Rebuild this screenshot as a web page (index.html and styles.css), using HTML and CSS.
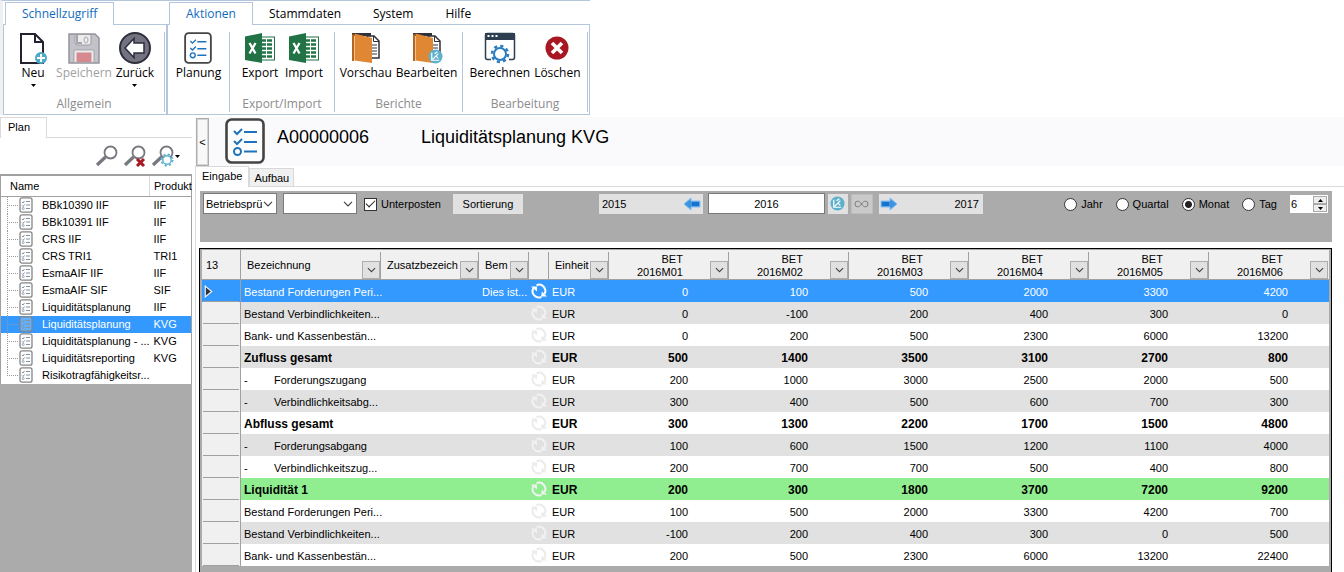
FILE: index.html
```html
<!DOCTYPE html>
<html lang="de">
<head>
<meta charset="utf-8">
<title>Liquiditätsplanung KVG</title>
<link rel="stylesheet" href="styles.css">
</head>
<body>
<svg class="defs" aria-hidden="true">
  <symbol id="list" viewBox="0 0 40 46">
    <rect x="1.500" y="1.500" width="37" height="43" rx="5" fill="#fdfdfe" stroke="#444" stroke-width="2.600"/>
    <g fill="none" stroke="#1e73be" stroke-width="2"><path d="M9 13l3 3 5-5M9 23l3 3 5-5M19 14h13M19 24h13M19 33.500h13"/><circle cx="12.500" cy="33.500" r="3.500"/></g>
  </symbol>
  <symbol id="node" viewBox="0 0 14 16">
    <rect x="1" y=".8" width="12" height="14.400" rx="2" fill="#f6f6f6" fill-opacity=".25" stroke="#858585" stroke-width="1.300"/>
    <path d="M3 5l1 1 1.500-2M3 8.500l1 1 1.500-2M7 4.500h4M7 8h4M7 11.500h4" fill="none" stroke="#8193a3"/><circle cx="4.200" cy="11.500" r="1" fill="none" stroke="#8193a3" stroke-width=".8"/>
  </symbol>
  <symbol id="branch" viewBox="0 0 18 17"><path d="M6.500 0v17M8 8.500h10" stroke="#999" stroke-dasharray="1 1" fill="none"/></symbol>
  <symbol id="branch-end" viewBox="0 0 18 17"><path d="M6.500 0v9M8 8.500h10" stroke="#999" stroke-dasharray="1 1" fill="none"/></symbol>
  <symbol id="chev" viewBox="0 0 10 6"><path d="M1 .8l4 4 4-4" fill="none" stroke="#444" stroke-width="1.200"/></symbol>
  <symbol id="tri" viewBox="0 0 5 3"><path d="M0 0h5L2.500 3z"/></symbol>
  <symbol id="cycle" viewBox="0 0 16 16">
    <path d="M10.500 13.800A6.200 6.200 0 0 1 2.500 5M5.500 2.300A6.200 6.200 0 0 1 13.500 11" fill="none" stroke="currentColor" stroke-width="2"/>
    <path d="M0 3.500h6v5zM16 13.500h-6l1-5z" fill="currentColor"/>
  </symbol>
  <symbol id="excel" viewBox="0 0 32 32">
    <rect x="15" y="5" width="15.500" height="23" fill="#fff" stroke="#217346" stroke-width="1"/>
    <path d="M18 8.500h10M18 12.500h10M18 16.500h10M18 20.500h10M18 24.500h10" stroke="#217346" stroke-width="2.400"/>
    <path d="M22.500 6v21" stroke="#fff"/>
    <path d="M1 4.500L18 1v30L1 28z" fill="#217346"/><path d="M5.500 11l6 10.500M11.500 11l-6 10.500" stroke="#fff" stroke-width="2.300"/>
  </symbol>
  <symbol id="book" viewBox="0 0 32 32">
    <path d="M17 4h7l5 5v17H19z" fill="#fff" stroke="#30303c" stroke-width="1.500"/><path d="M23.500 4v5.500H29M22 13h5M22 16h5M22 19h5M22 22h5" fill="none" stroke="#30303c"/>
    <path d="M2 1h19v3H2z" fill="#30303c"/><path d="M2 2l2 .5V29H2z" fill="#b5651d"/><path d="M4.500 1.500L22 6v25L4.500 28.500z" fill="#df8733"/>
  </symbol>
  <symbol id="edit" viewBox="0 0 16 16"><circle cx="8" cy="8" r="7.500" fill="#5fb0cc"/><path d="M4 4v8h8M5 11l6-6M8 7l3 3M7 5l3-2" fill="none" stroke="#fff" stroke-width="1.300"/></symbol>
  <symbol id="lens" viewBox="0 0 24 24"><path d="M2 21l8.500-8" stroke="#77777f" stroke-width="3.200"/><circle cx="15.500" cy="8.500" r="6" fill="none" stroke="#77777f" stroke-width="1.800"/></symbol>
  <symbol id="gear" viewBox="0 0 20 20"><circle cx="10" cy="10" r="6" fill="#fff" stroke="currentColor" stroke-width="2"/><circle cx="10" cy="10" r="8" fill="none" stroke="currentColor" stroke-width="2.500" stroke-dasharray="3.140 3.143"/></symbol>
  <symbol id="arrow" viewBox="0 0 18 14"><path d="M1 4h9V1l7 6-7 6v-3H1z" fill="#3e93df" stroke="#84bdf0"/><path d="M2 5h7v4H2z" fill="#1772ce"/></symbol>
</svg>

<header class="ribbon">
  <section class="pane quick">
    <nav class="tabs"><button class="tab on">Schnellzugriff</button></nav>
    <div class="groups">
      <div class="group g-general">
        <div class="tools">
          <button class="tool"><svg viewBox="0 0 32 32"><path d="M4 2h14l8 8v21H4z" fill="#fff" stroke="#222230" stroke-width="2"/><path d="M18 2v8h8" fill="none" stroke="#222230" stroke-width="2"/><circle cx="24" cy="26" r="6" fill="#4ba9c9"/><path d="M20 26h8M24 22v8" stroke="#fff" stroke-width="2"/></svg>Neu<svg class="drop"><use href="#tri"/></svg></button>
          <button class="tool off"><svg viewBox="0 0 32 32"><path d="M1 2h26l4 4v25H1z" fill="#c2c2c8" stroke="#94949c" stroke-width="1.500"/><path d="M7 2.500h16V11q0 2-2 2H9q-2 0-2-2z" fill="#ececef" stroke="#9b9ba3"/><path d="M9 3v8h5" fill="none" stroke="#a5a5ad" stroke-width="2"/><ellipse cx="18" cy="8" rx="2" ry="3" fill="none" stroke="#aaa"/><path d="M6 30.500V18h20v12.500z" fill="#ececef" stroke="#a5a5ad"/><path d="M8.500 20.500h15v9.500h-15z" fill="#d58a90"/></svg>Speichern</button>
          <button class="tool"><svg viewBox="0 0 32 32"><circle cx="16" cy="16" r="15" fill="#73737f" stroke="#2d2d3c" stroke-width="2"/><path d="M6 16L15 6.500V11h10v10H15v4.500z" fill="#fff" stroke="#2d2d3c" stroke-width="1.500"/></svg>Zurück<svg class="drop"><use href="#tri"/></svg></button>
        </div>
        <span class="caption">Allgemein</span>
      </div>
    </div>
  </section>
  <section class="pane actions">
    <nav class="tabs"><button class="tab on">Aktionen</button><button class="tab wide">Stammdaten</button><button class="tab">System</button><button class="tab">Hilfe</button></nav>
    <div class="groups">
      <div class="group g-plan"><div class="tools"><button class="tool"><svg viewBox="-3 0 46 46"><use href="#list" width="40" height="46"/></svg>Planung</button></div></div>
      <div class="group g-export">
        <div class="tools"><button class="tool"><svg><use href="#excel"/></svg>Export</button><button class="tool"><svg><use href="#excel"/></svg>Import</button></div>
        <span class="caption">Export/Import</span>
      </div>
      <div class="group g-reports">
        <div class="tools"><button class="tool"><svg><use href="#book"/></svg>Vorschau</button><button class="tool"><svg viewBox="0 0 32 32"><use href="#book"/><use href="#edit" x="17" y="17" width="15" height="15"/></svg>Bearbeiten</button></div>
        <span class="caption">Berichte</span>
      </div>
      <div class="group g-work">
        <div class="tools"><button class="tool"><svg viewBox="0 0 32 32"><rect x="1.500" y="1.500" width="29" height="26" rx="2" fill="#fff" stroke="#2c3e50" stroke-width="1.500"/><path d="M1 1h30v7H1z" fill="#2c3e50"/><path d="M3.500 4h2M7.500 4h2M11.500 4h2" stroke="#fff" stroke-width="2"/><path d="M7 24h18v6H7z" fill="#fff"/><g color="#2a7cc0"><use href="#gear" x="6" y="12" width="20" height="20"/></g></svg>Berechnen</button><button class="tool"><svg viewBox="0 0 32 32"><circle cx="16" cy="16" r="11.500" fill="#a81722"/><path d="M11 11l10 10M21 11L11 21" stroke="#fff" stroke-width="3.600"/></svg>Löschen</button></div>
        <span class="caption">Bearbeitung</span>
      </div>
    </div>
  </section>
</header>

<div class="work">
  <aside class="side">
    <nav class="strip"><button class="sheet on">Plan</button></nav>
    <div class="find">
      <button aria-label="Suchen"><svg><use href="#lens"/></svg></button>
      <button aria-label="Suche löschen"><svg viewBox="0 0 24 24"><use href="#lens"/><path d="M14 15l7 7M21 15l-7 7" stroke="#a81722" stroke-width="3"/></svg></button>
      <button aria-label="Suchoptionen"><svg viewBox="0 0 24 24"><use href="#lens"/><g color="#5fb0cc"><use href="#gear" x="9" y="9" width="14" height="14"/></g></svg><svg class="drop"><use href="#tri"/></svg></button>
    </div>
    <table class="tree">
      <thead><tr><th class="c-name">Name</th><th>Produkt</th></tr></thead>
      <tbody>
        <tr><td><div class="leaf"><svg class="br"><use href="#branch"/></svg><svg class="nd"><use href="#node"/></svg>BBk10390 IIF</div></td><td>IIF</td></tr>
        <tr><td><div class="leaf"><svg class="br"><use href="#branch"/></svg><svg class="nd"><use href="#node"/></svg>BBk10391 IIF</div></td><td>IIF</td></tr>
        <tr><td><div class="leaf"><svg class="br"><use href="#branch"/></svg><svg class="nd"><use href="#node"/></svg>CRS IIF</div></td><td>IIF</td></tr>
        <tr><td><div class="leaf"><svg class="br"><use href="#branch"/></svg><svg class="nd"><use href="#node"/></svg>CRS TRI1</div></td><td>TRI1</td></tr>
        <tr><td><div class="leaf"><svg class="br"><use href="#branch"/></svg><svg class="nd"><use href="#node"/></svg>EsmaAIF IIF</div></td><td>IIF</td></tr>
        <tr><td><div class="leaf"><svg class="br"><use href="#branch"/></svg><svg class="nd"><use href="#node"/></svg>EsmaAIF SIF</div></td><td>SIF</td></tr>
        <tr><td><div class="leaf"><svg class="br"><use href="#branch"/></svg><svg class="nd"><use href="#node"/></svg>Liquiditätsplanung</div></td><td>IIF</td></tr>
        <tr class="sel"><td><div class="leaf"><svg class="br"><use href="#branch"/></svg><svg class="nd"><use href="#node"/></svg>Liquiditätsplanung</div></td><td>KVG</td></tr>
        <tr><td><div class="leaf"><svg class="br"><use href="#branch"/></svg><svg class="nd"><use href="#node"/></svg>Liquiditätsplanung - ...</div></td><td>KVG</td></tr>
        <tr><td><div class="leaf"><svg class="br"><use href="#branch"/></svg><svg class="nd"><use href="#node"/></svg>Liquiditätsreporting</div></td><td>KVG</td></tr>
        <tr><td><div class="leaf"><svg class="br"><use href="#branch-end"/></svg><svg class="nd"><use href="#node"/></svg>Risikotragfähigkeitsr...</div></td><td></td></tr>
      </tbody>
    </table>
    <div class="void"></div>
  </aside>

  <main class="main">
    <div class="head">
      <button class="fold">&lt;</button>
      <svg class="badge"><use href="#list"/></svg>
      <h1><span class="key">A00000006</span><span>Liquiditätsplanung KVG</span></h1>
    </div>
    <nav class="strip"><button class="sheet on">Eingabe</button><button class="sheet">Aufbau</button></nav>
    <div class="body">
      <form class="bar">
        <div class="pick"><select aria-label="Sicht"><option>Betriebsprü</option></select><svg><use href="#chev"/></svg></div>
        <div class="pick"><select aria-label="Filter"><option></option></select><svg><use href="#chev"/></svg></div>
        <label class="check"><input type="checkbox" checked>Unterposten</label>
        <button type="button" class="sort">Sortierung</button>
        <div class="years">
          <button type="button" class="year">2015<svg class="left"><use href="#arrow"/></svg></button>
          <input type="text" value="2016" aria-label="Jahr">
          <button type="button" class="mini" aria-label="Bearbeiten"><svg><use href="#edit"/></svg></button>
          <button type="button" class="mini dim" aria-label="Unbegrenzt"><svg viewBox="0 0 16 8"><path d="M8 4C6.500 2 5.500 1 4 1a3 3 0 0 0 0 6c1.500 0 2.500-1 4-3s2.500-3 4-3a3 3 0 0 1 0 6C10.500 7 9.500 6 8 4z" fill="none" stroke="#777"/></svg></button>
          <button type="button" class="year next"><svg><use href="#arrow"/></svg>2017</button>
        </div>
        <div class="units">
          <label><input type="radio" name="u">Jahr</label>
          <label><input type="radio" name="u">Quartal</label>
          <label><input type="radio" name="u" checked>Monat</label>
          <label><input type="radio" name="u">Tag</label>
          <div class="spin"><input type="text" value="6" aria-label="Anzahl"><div><button type="button" aria-label="Mehr"><svg class="up"><use href="#tri"/></svg></button><button type="button" aria-label="Weniger"><svg><use href="#tri"/></svg></button></div></div>
        </div>
      </form>
      <div class="frame">
        <table class="grid">
          <colgroup><col class="w-no"><col class="w-name"><col class="w-extra"><col class="w-note"><col class="w-state"><col class="w-unit"><col><col><col><col><col><col></colgroup>
          <thead><tr>
            <th class="no">13</th>
            <th><div class="hd">Bezeichnung<button aria-label="Filter"><svg><use href="#chev"/></svg></button></div></th>
            <th><div class="hd">Zusatzbezeich<button aria-label="Filter"><svg><use href="#chev"/></svg></button></div></th>
            <th><div class="hd">Bem<button aria-label="Filter"><svg><use href="#chev"/></svg></button></div></th>
            <th><div class="hd"></div></th>
            <th><div class="hd">Einheit<button aria-label="Filter"><svg><use href="#chev"/></svg></button></div></th>
            <th><div class="hd num"><span>BET<br>2016M01</span><button aria-label="Filter"><svg><use href="#chev"/></svg></button></div></th>
            <th><div class="hd num"><span>BET<br>2016M02</span><button aria-label="Filter"><svg><use href="#chev"/></svg></button></div></th>
            <th><div class="hd num"><span>BET<br>2016M03</span><button aria-label="Filter"><svg><use href="#chev"/></svg></button></div></th>
            <th><div class="hd num"><span>BET<br>2016M04</span><button aria-label="Filter"><svg><use href="#chev"/></svg></button></div></th>
            <th><div class="hd num"><span>BET<br>2016M05</span><button aria-label="Filter"><svg><use href="#chev"/></svg></button></div></th>
            <th><div class="hd num"><span>BET<br>2016M06</span><button aria-label="Filter"><svg><use href="#chev"/></svg></button></div></th>
          </tr></thead>
          <tbody>
            <tr class="sel"><th><svg class="cur" viewBox="0 0 8 12"><path d="M1 1l6 5-6 5z" fill="#333" stroke="#fff"/></svg></th><td>Bestand Forderungen Peri...</td><td></td><td>Dies ist...</td><td><svg><use href="#cycle"/></svg></td><td>EUR</td><td>0</td><td>100</td><td>500</td><td>2000</td><td>3300</td><td>4200</td></tr>
            <tr><th></th><td>Bestand Verbindlichkeiten...</td><td></td><td></td><td><svg><use href="#cycle"/></svg></td><td>EUR</td><td>0</td><td>-100</td><td>200</td><td>400</td><td>300</td><td>0</td></tr>
            <tr><th></th><td>Bank- und Kassenbestän...</td><td></td><td></td><td><svg><use href="#cycle"/></svg></td><td>EUR</td><td>0</td><td>200</td><td>500</td><td>2300</td><td>6000</td><td>13200</td></tr>
            <tr class="sum"><th></th><td>Zufluss gesamt</td><td></td><td></td><td><svg><use href="#cycle"/></svg></td><td>EUR</td><td>500</td><td>1400</td><td>3500</td><td>3100</td><td>2700</td><td>800</td></tr>
            <tr><th></th><td><span class="dash">-</span>Forderungszugang</td><td></td><td></td><td><svg><use href="#cycle"/></svg></td><td>EUR</td><td>200</td><td>1000</td><td>3000</td><td>2500</td><td>2000</td><td>500</td></tr>
            <tr><th></th><td><span class="dash">-</span>Verbindlichkeitsabg...</td><td></td><td></td><td><svg><use href="#cycle"/></svg></td><td>EUR</td><td>300</td><td>400</td><td>500</td><td>600</td><td>700</td><td>300</td></tr>
            <tr class="sum"><th></th><td>Abfluss gesamt</td><td></td><td></td><td><svg><use href="#cycle"/></svg></td><td>EUR</td><td>300</td><td>1300</td><td>2200</td><td>1700</td><td>1500</td><td>4800</td></tr>
            <tr><th></th><td><span class="dash">-</span>Forderungsabgang</td><td></td><td></td><td><svg><use href="#cycle"/></svg></td><td>EUR</td><td>100</td><td>600</td><td>1500</td><td>1200</td><td>1100</td><td>4000</td></tr>
            <tr><th></th><td><span class="dash">-</span>Verbindlichkeitszug...</td><td></td><td></td><td><svg><use href="#cycle"/></svg></td><td>EUR</td><td>200</td><td>700</td><td>700</td><td>500</td><td>400</td><td>800</td></tr>
            <tr class="sum total"><th></th><td>Liquidität 1</td><td></td><td></td><td><svg><use href="#cycle"/></svg></td><td>EUR</td><td>200</td><td>300</td><td>1800</td><td>3700</td><td>7200</td><td>9200</td></tr>
            <tr><th></th><td>Bestand Forderungen Peri...</td><td></td><td></td><td><svg><use href="#cycle"/></svg></td><td>EUR</td><td>100</td><td>500</td><td>2000</td><td>3300</td><td>4200</td><td>700</td></tr>
            <tr><th></th><td>Bestand Verbindlichkeiten...</td><td></td><td></td><td><svg><use href="#cycle"/></svg></td><td>EUR</td><td>-100</td><td>200</td><td>400</td><td>300</td><td>0</td><td>500</td></tr>
            <tr><th></th><td>Bank- und Kassenbestän...</td><td></td><td></td><td><svg><use href="#cycle"/></svg></td><td>EUR</td><td>200</td><td>500</td><td>2300</td><td>6000</td><td>13200</td><td>22400</td></tr>
          </tbody>
        </table>
      </div>
    </div>
  </main>
</div>
</body>
</html>
```
FILE: styles.css
```css
* { box-sizing: border-box; }
body {
  margin: 0; height: 100vh; overflow: hidden; display: flex; flex-direction: column;
  background: #fff; color: #000; font: 11px/14px "Liberation Sans", Arial, sans-serif;
}
button, input, select { font: inherit; color: inherit; margin: 0; padding: 0; border: 0; border-radius: 0; background: none; }
svg { display: block; flex: none; }
.defs { position: absolute; width: 0; height: 0; }

/* Ribbon */
.ribbon { display: flex; align-self: flex-start; border-left: 3px solid #f0f0f0; border-top: 1px solid #b4c6dc; background: #fff; font: 12px/16px "Open Sans", "Noto Sans", sans-serif; }
.pane { display: flex; flex-direction: column; }
.tabs { display: flex; height: 24px; padding: 1px 2px 0; margin-bottom: -1px; }
.tab { height: 23px; padding: 0 16px; white-space: nowrap; }
.tab.wide { padding: 0 16px; }
.tab.on { position: relative; color: #0f6cbd; background: #fff; border: 1px solid #b4c6dc; border-bottom: 0; }
.groups { display: flex; height: 91px; border: 1px solid #b4c6dc; padding: 7px 1px 2px 0; }
.group { display: flex; flex-direction: column; justify-content: space-between; border-right: 1px solid #b4c6dc; }
.g-general { width: 161px; }
.g-plan { width: 62px; }
.g-export { width: 105px; }
.g-reports { width: 128px; }
.g-work { width: 125px; }
.tools { display: flex; justify-content: center; gap: 2px; }
.g-reports .tools, .g-work .tools { gap: 4px; }
.tool { display: flex; flex-direction: column; align-items: center; min-width: 42px; white-space: nowrap; }
.tool svg { width: 32px; height: 32px; margin-bottom: 1px; }
.tool .drop { width: 5px; height: 3px; margin-top: 3px; }
.tool.off { color: #a0a0a0; }
.caption { text-align: center; color: #8c8c8c; }

/* Page halves */
.work { flex: 1; display: flex; min-height: 0; padding-top: 2px; }
.side { width: 192px; flex: none; display: flex; flex-direction: column; }
.strip { display: flex; align-items: flex-end; height: 21px; border-bottom: 1px solid #d9d9d9; }
.sheet { height: 18px; padding: 0 4px; background: #f0f0f0; border: 1px solid #d9d9d9; border-bottom: 0; }
.sheet.on { height: 21px; margin-bottom: -1px; padding: 0 6px 2px; background: #fff; }
.side .sheet { padding: 0 16px 2px 7px; }
.find { display: flex; align-items: center; justify-content: flex-end; gap: 4px; height: 36px; padding-right: 12px; }
.find button { display: flex; align-items: center; }
.find svg { width: 24px; height: 24px; }
.find .drop { width: 5px; height: 3px; }
.tree { width: 100%; table-layout: fixed; border-collapse: collapse; border: 1px solid #a0a0a0; border-top-width: 2px; border-bottom: 0; }
.tree th { height: 21px; padding: 0 0 0 4px; font-weight: normal; text-align: left; border-bottom: 1px solid #a0a0a0; white-space: nowrap; }
.tree .c-name { width: 149px; padding-left: 9px; border-right: 1px solid #d9d9d9; }
.tree td { height: 17px; padding: 0 0 0 4px; white-space: nowrap; }
.tree td:first-child { padding: 0; }
.leaf { display: flex; align-items: center; height: 17px; }
.br { width: 18px; height: 17px; }
.nd { width: 14px; height: 16px; margin-right: 9px; }
.sel { background: #3399ff; color: #fff; }
.void { flex: 1; background: #ababab; }

/* Main area */
.main { flex: 1; min-width: 0; display: flex; flex-direction: column; margin-left: 3px; }
.head { display: flex; align-items: flex-start; height: 49px; padding: 1px; background: #fafafd; }
.fold { width: 13px; height: 48px; border: 2px solid #d4d4d4; outline: 1px solid #adadad; outline-offset: -1px; background: #f8f8f8; }
.badge { width: 40px; height: 46px; margin: 0 12px 0 16px; }
h1 { display: flex; margin: 0; font-size: 18px; line-height: 38px; font-weight: normal; }
.key { width: 144px; }
.body { flex: 1; min-height: 0; display: flex; flex-direction: column; gap: 6px; padding: 4px 12px 0 4px; border-left: 1px solid #d9d9d9; }
.bar { display: flex; align-items: flex-start; height: 51px; padding: 2px 4px 0 3px; background: #ababab; }
.pick { position: relative; width: 74px; margin-right: 6px; }
.pick select { appearance: none; width: 100%; height: 21px; padding-left: 2px; background: #fff; border: 1px solid #7a7a7a; }
.pick svg { position: absolute; right: 4px; top: 8px; width: 10px; height: 6px; pointer-events: none; }
.bar label { display: flex; align-items: center; gap: 4px; height: 22px; }
.check input { appearance: none; width: 13px; height: 13px; border: 1px solid #333; background: #fff; display: grid; place-items: center; }
.check input:checked::after { content: ""; width: 8px; height: 4px; border: solid #222; border-width: 0 0 1px 1px; transform: rotate(-45deg); margin-bottom: 3px; }
.check { margin: 0 12px 0 1px; }
.sort { width: 70px; height: 20px; margin-top: 1px; background: #e1e1e1; }
.years { display: flex; gap: 3px; margin-left: 76px; align-items: center; }
.year { display: flex; align-items: center; justify-content: space-between; width: 104px; height: 20px; padding: 0 2px 0 3px; background: #e1e1e1; }
.year.next { margin-left: 3px; padding: 0 4px 0 1px; }
.year svg { width: 18px; height: 14px; }
.year .left { transform: rotate(180deg); }
.years input { width: 117px; height: 21px; margin-left: 2px; text-align: center; background: #fff; border: 1px solid #7a7a7a; }
.mini { display: grid; place-items: center; width: 20px; height: 20px; background: #e1e1e1; }
.mini svg { width: 15px; height: 15px; }
.mini.dim { width: 22px; background: #cacaca; border: 1px solid #bdbdbd; }
.mini.dim svg { height: 8px; }
.units { display: flex; gap: 13px; margin-left: auto; }
.units label input { appearance: none; width: 13px; height: 13px; border: 1px solid #333; border-radius: 50%; background: #fff; }
.units label input:checked { background: radial-gradient(circle, #222 0 3px, #fff 4px); }
.spin { display: flex; align-items: center; width: 38px; height: 18px; margin-top: 2px; background: #fff; }
.spin input { width: 23px; padding-left: 1px; }
.spin button { display: grid; place-items: center; width: 14px; height: 8px; background: #eee; border: 1px solid #aaa; }
.spin svg { width: 5px; height: 3px; }
.spin .up { transform: rotate(180deg); }

/* Planning grid */
.frame { flex: 1; min-height: 0; overflow: hidden; padding: 1px 2px 0; background: #ababab; border: 1px solid #000; border-bottom: 0; margin-left: -1px; }
.grid { width: 100%; table-layout: fixed; border-collapse: separate; border-spacing: 0; }
.w-no { width: 39px; }
.w-name { width: 140px; }
.w-extra { width: 98px; }
.w-note { width: 50px; }
.w-state { width: 20px; }
.w-unit { width: 60px; }
.grid th { padding: 0; font-weight: normal; text-align: left; background: #f0f0f0; }
.grid thead th { height: 30px; border-bottom: 1px solid #a0a0a0; }
.grid thead .no { padding-left: 4px; border-right: 1px solid #a0a0a0; }
.hd { display: flex; align-items: center; justify-content: space-between; height: 27px; margin-top: 2px; padding-left: 6px; border-right: 1px solid #a0a0a0; line-height: 13px; white-space: nowrap; }
.hd.num { text-align: right; padding-left: 28px; }
.grid th:last-child .hd { border-right: 0; padding-right: 1px; }
.hd button { display: grid; place-items: center; align-self: flex-end; width: 18px; height: 18px; flex: none; background: #e1e1e1; border: 1px solid #adadad; }
.hd svg { width: 9px; height: 6px; }
.grid tbody th { border-right: 1px solid #a0a0a0; background: linear-gradient(#a0a0a0, #a0a0a0) 1px 100% / 36px 1px no-repeat #f0f0f0; }
.grid td { height: 22px; padding: 2px 3px 0; white-space: nowrap; }
.grid tbody tr { background: #fff; }
.grid tbody tr:nth-child(even) { background: #e1e1e1; }
.grid tbody .total:nth-child(n) { background: #90ee90; }
.grid tbody .sel, .grid .sel th { background-color: #3399ff; }
.cur { width: 9px; height: 13px; margin-left: 2px; }
.grid td:nth-child(5) { padding: 0 0 0 2px; color: #ebebeb; }
.grid tr:nth-child(even) td:nth-child(5) { color: #f1f1f1; }
.grid .total td:nth-child(5), .grid .sel td:nth-child(5) { color: #fff; }
.grid td svg { width: 16px; height: 16px; }
.grid td:nth-child(n+7) { text-align: right; padding-right: 41px; }
.dash { display: inline-block; width: 30px; }
.sum td { font-size: 12px; font-weight: bold; }
```
